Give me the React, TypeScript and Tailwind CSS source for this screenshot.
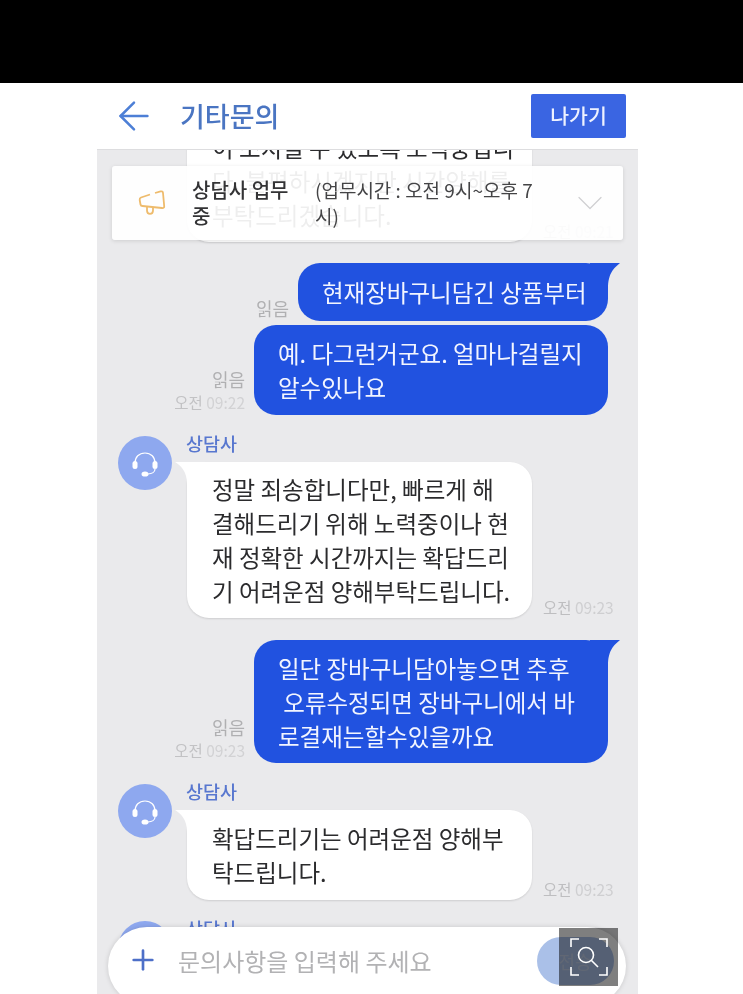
import { ArrowLeft, ChevronDown, Plus } from "lucide-react";

const FONT = "[font-family:'Noto_Sans_CJK_KR','Noto_Sans',sans-serif]";

// agent avatar, the headset is not close enough in lucide
const Avatar = () => (
  <div className="flex h-[54px] w-[54px] shrink-0 items-center justify-center rounded-full bg-[#8ea8ef]">
    <svg width="32" height="32" viewBox="0 0 32 32" fill="none">
      <path d="M6 16c0-6 4-10 10-10s10 4 10 10" stroke="#fff" strokeWidth="1.2" />
      <rect x="3.5" y="14" width="5" height="8" rx="2.5" fill="#fff" />
      <rect x="23.5" y="14" width="5" height="8" rx="2.5" fill="#fff" />
      <path d="M26 22c0 3-3 5-7 5" stroke="#fff" strokeWidth="1.2" />
      <ellipse cx="16" cy="27" rx="3.5" ry="2.6" fill="#fff" />
    </svg>
  </div>
);

const Lines = ({ lines }: { lines: string[] }) => (
  <>
    {lines.map((l) => (
      <div key={l} className="whitespace-pre">
        {l}
      </div>
    ))}
  </>
);

const MyBubble = ({
  lines,
  width,
  time,
  tail,
  className,
}: {
  lines: string[];
  width: string;
  time?: string;
  tail?: boolean;
  className: string;
}) => (
  <div className={`flex items-end justify-end gap-[9px] pr-[30px] ${className}`}>
    <div className="pb-[1px] text-right text-[18px] leading-[23px] text-[#b0b0b2]">
      <div>읽음</div>
      {time && (
        <div className="text-[15.5px] text-[#c2c2c4]">
          오전 <span className="text-[#d2d2d4]">{time}</span>
        </div>
      )}
    </div>
    <div className={`relative rounded-[22px] bg-[#2152e0] pl-[24px] text-[23.5px] leading-[34px] text-[#f2f5ff] ${width}`}>
      {tail && (
        <svg className="absolute -right-[12px] top-0" width="30" height="26" viewBox="0 0 30 26">
          <path d="M0 0H30C24 5 18 10 18 26H0Z" fill="#2152e0" />
        </svg>
      )}
      <div className="relative">
        <Lines lines={lines} />
      </div>
    </div>
  </div>
);

const AgentBubble = ({ lines, time, pad }: { lines: string[]; time: string; pad: string }) => (
  <div className="ml-[90px] flex items-end gap-[11px] whitespace-nowrap">
    <div className={`relative w-[345px] shrink-0 rounded-[22px] bg-white pl-[25px] text-[23.5px] leading-[34px] text-[#2b2b2d] shadow-[0_1px_2px_rgba(0,0,0,0.12)] ${pad}`}>
      <svg className="absolute -left-[12px] top-0" width="36" height="22" viewBox="0 0 36 22">
        <path d="M36 0H0C6 4 12 9 12 22H36Z" fill="#fff" />
      </svg>
      <div className="relative">
        <Lines lines={lines} />
      </div>
    </div>
    <div className="pb-[1px] text-[15.5px] leading-[20px] text-[#bebec0]">
      오전 <span className="text-[#cfcfd1]">{time}</span>
    </div>
  </div>
);

const AgentHead = ({ className }: { className: string }) => (
  <div className={`ml-[21px] flex h-[26px] items-start gap-[14px] ${className}`}>
    <div className="h-[26px]">
      <Avatar />
    </div>
    <div className="text-[18.5px] font-medium leading-[14px] text-[#5877cf]">상담사</div>
  </div>
);

export default function App() {
  return (
    <div className={`h-[994px] w-[743px] overflow-hidden bg-white ${FONT}`}>
      <div className="h-[83px] bg-black" />
      <div className="relative ml-[97px] w-[541px] blur-[0.5px]">
        {/* header */}
        <header className="flex h-[67px] items-center justify-between border-b border-[#dddddf] bg-white pl-[14px] pr-[12px]">
          <div className="flex items-center gap-[23px]">
            <ArrowLeft className="h-[46px] w-[46px] text-[#4d7fd6]" strokeWidth={1.3} />
            <div className="text-[27px] font-medium text-[#4a75c2]">기타문의</div>
          </div>
          <button className="mb-[1px] h-[44px] w-[95px] rounded-[2px] bg-[#3a65e2] text-[20.5px] font-medium text-[#eef2ff]">
            나가기
          </button>
        </header>

        {/* messages */}
        <div className="h-[844px] overflow-hidden bg-[#eaeaec]">
          <div className="-mt-[30px]">
            <AgentBubble
              lines={["이 조치될 수 있도록 노력중입니", "다. 불편하시겠지만 시간양해를", "부탁드리겠습니다."]}
              time="09:21"
              pad="py-[10px]"
            />
          </div>
          <MyBubble className="mt-[21px]" lines={["현재장바구니담긴 상품부터"]} width="w-[310px] py-[12px]" tail />
          <MyBubble className="mt-[4px]" lines={["예. 다그런거군요. 얼마나걸릴지", "알수있나요"]} width="w-[354px] py-[11px]" time="09:22" />
          <AgentHead className="mt-[21px]" />
          <AgentBubble
            lines={["정말 죄송합니다만, 빠르게 해", "결해드리기 위해 노력중이나 현", "재 정확한 시간까지는 확답드리", "기 어려운점 양해부탁드립니다."]}
            time="09:23"
            pad="py-[10px]"
          />
          <MyBubble
            className="mt-[22px]"
            lines={["일단 장바구니담아놓으면 추후", " 오류수정되면 장바구니에서 바", "로결재는할수있을까요"]}
            width="w-[354px] py-[10.5px]"
            time="09:23"
            tail
          />
          <AgentHead className="mt-[21px]" />
          <AgentBubble lines={["확답드리기는 어려운점 양해부", "탁드립니다."]} time="09:23" pad="py-[11px]" />
          <AgentHead className="mt-[21px]" />
        </div>

        {/* notice over the messages */}
        <div className="absolute left-[15px] top-[83px] flex h-[74px] w-[511px] items-center rounded-[3px] bg-white/92 pl-[26px] shadow-[0_1px_4px_rgba(0,0,0,0.12)]">
          <svg width="28" height="26" viewBox="0 0 28 26" fill="none" stroke="#eebb6c" strokeWidth="1.8" strokeLinejoin="round">
            <path d="M12 4.5L3 7.5C1.8 8 1.5 8.5 1.7 10L2.5 14.5C2.7 15.5 3.3 16 4.5 16L24 18C25.5 18.2 26.4 17.6 26.2 16L25 3C24.8 1.6 24 1 22.6 1.4L17 3" />
            <path d="M9 16.5V20.5C9 25 15 25 15 20.5V17.2" />
          </svg>
          <div className="ml-[26px] w-[116px] text-[20px] font-medium leading-[26px] text-[#333335]">상담사 업무 중</div>
          <div className="ml-[7px] w-[236px] text-[19px] leading-[26px] text-[#444446]">(업무시간 : 오전 9시~오후 7시)</div>
          <ChevronDown className="ml-[17px] h-[44px] w-[44px] text-[#d0d0d2]" strokeWidth={0.7} />
        </div>

        {/* input bar */}
        <div className="absolute left-[11px] top-[844px] flex h-[78px] w-[518px] items-start rounded-full bg-white pl-[19px] pt-[16px] shadow-[0_0_5px_rgba(0,0,0,0.15)]">
          <Plus className="mt-[1px] h-[32px] w-[32px] text-[#4d6fc8]" strokeWidth={2} />
          <div className="ml-[19px] text-[24px] leading-[36px] text-[#b2b2b4]">문의사항을 입력해 주세요</div>
          <div className="ml-[105px] -mt-[6px] flex h-[48px] w-[77px] shrink-0 items-center justify-center rounded-full bg-[#aac0e8] text-[18px] text-[#c2cfe8]">
            전송
          </div>
        </div>
      </div>

      {/* capture button of the viewer, sits on top of everything */}
      <div className="absolute left-[559px] top-[928px] flex h-[58px] w-[59px] items-center justify-center bg-black/50">
        <svg width="38" height="38" viewBox="0 0 38 38" fill="none" stroke="#fff" strokeWidth="1.6">
          <path d="M1 9V1H9M29 1H37V9M1 29V37H9M29 37H37V29" />
          <circle cx="16" cy="17" r="7.5" />
          <path d="M21.5 22.5L28 29" />
        </svg>
      </div>
    </div>
  );
}
